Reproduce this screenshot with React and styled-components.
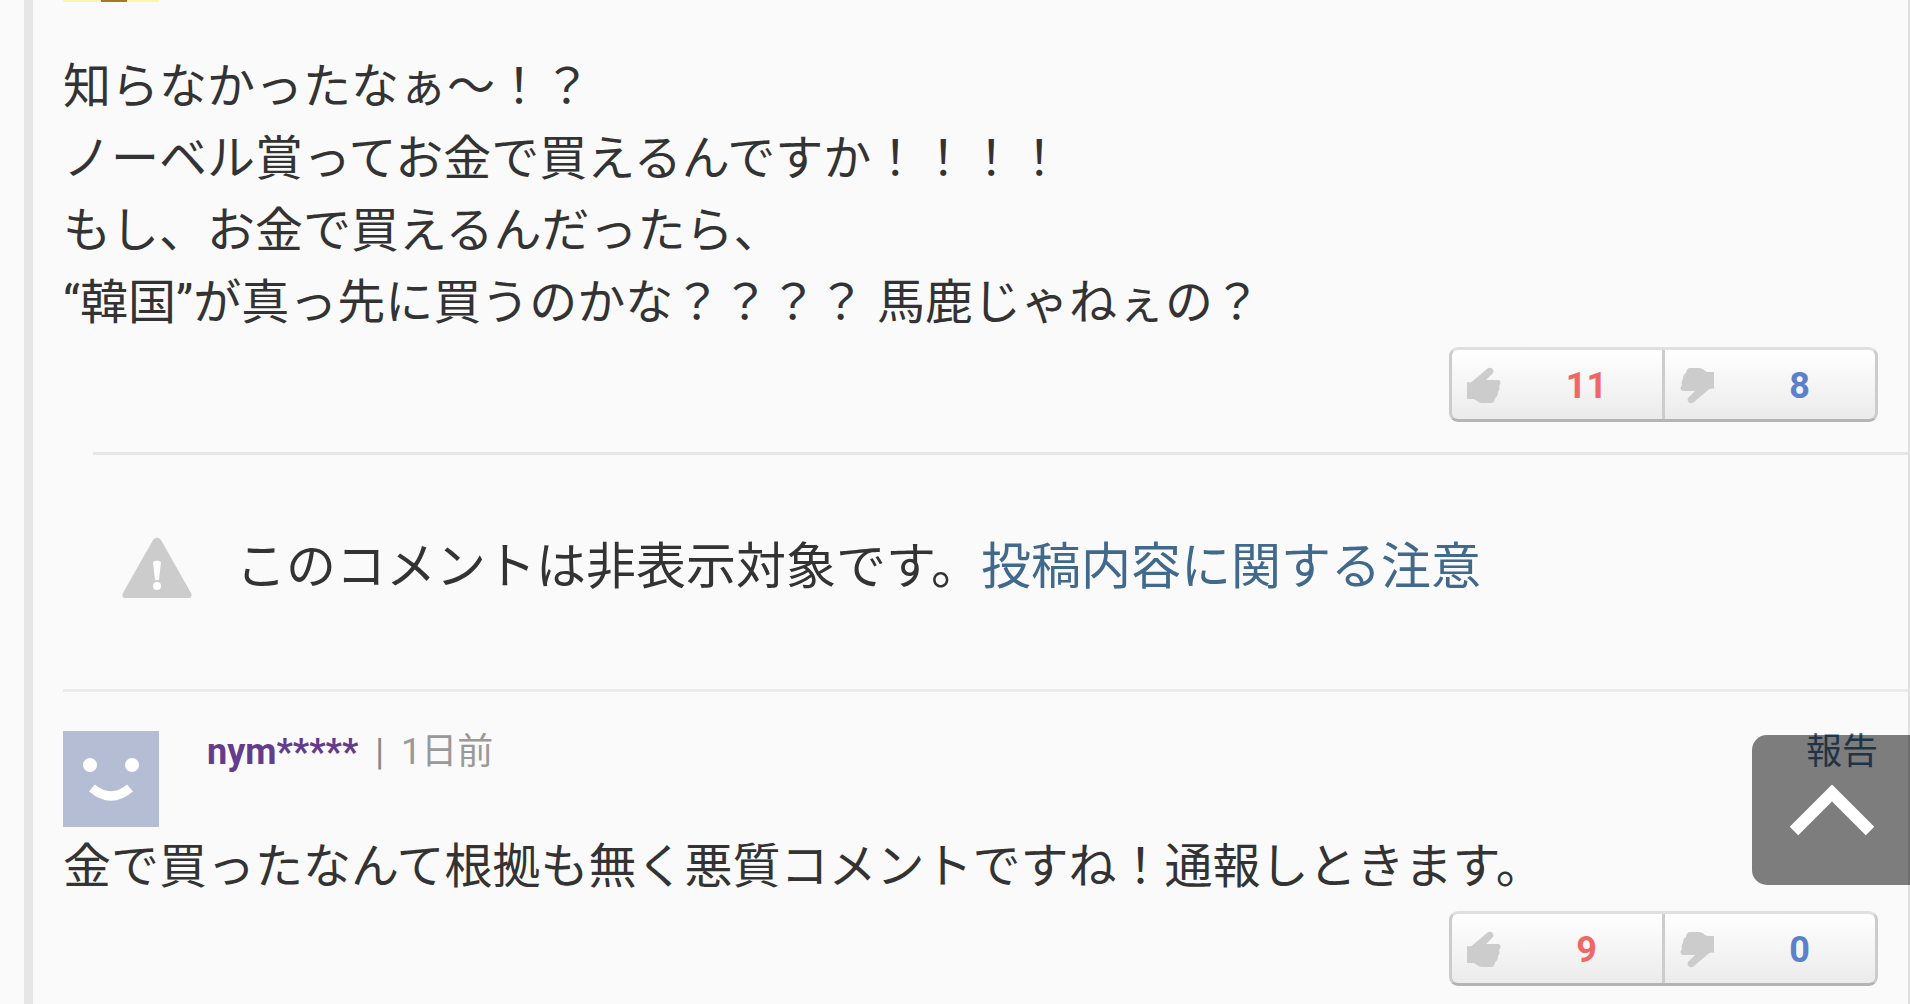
import styled, { createGlobalStyle } from 'styled-components';

const comments = [
  {
    id: 1,
    lines: [
      '知らなかったなぁ〜！？',
      'ノーベル賞ってお金で買えるんですか！！！！',
      'もし、お金で買えるんだったら、',
      '“韓国”が真っ先に買うのかな？？？？ 馬鹿じゃねぇの？',
    ],
    good: 11,
    bad: 8,
  },
  {
    id: 2,
    name: 'nym*****',
    date: '1日前',
    lines: ['金で買ったなんて根拠も無く悪質コメントですね！通報しときます。'],
    good: 9,
    bad: 0,
  },
];

function Thumb({ down }) {
  return (
    <svg width='34' height='37' viewBox='0 0 34 37' aria-hidden='true'>
      <path
        transform={down ? 'rotate(180 17 18.5)' : undefined}
        fill='#ccc'
        d='M0 15 C3 16 5 15 7 13 L20 2 C23 -1 28 2 26 6 L19 13 H31 C34 13 34 17 32 19 C33 21 32 24 31 25 C31 28 30 30 28 31 C28 34 26 36 24 36 H15 C11 36 9 32 6 32 H0 Z'
      />
    </svg>
  );
}

function Votes({ good, bad }) {
  return (
    <VoteGroup>
      <VoteButton type='button' $color='#f06767' aria-label={`そう思う ${good}`}>
        <Thumb />
        <span>{good}</span>
      </VoteButton>
      <VoteButton type='button' $color='#5b80cc' aria-label={`そう思わない ${bad}`}>
        <Thumb down />
        <span>{bad}</span>
      </VoteButton>
    </VoteGroup>
  );
}

function Face() {
  return (
    <FaceIcon viewBox='0 0 96 96' role='img' aria-label='avatar'>
      <rect width='96' height='96' fill='#b5bdd4' />
      <circle cx='27' cy='34' r='7' fill='#fff' />
      <circle cx='69' cy='34' r='7' fill='#fff' />
      <path d='M29 57 Q48 73 67 57' fill='none' stroke='#fff' strokeWidth='9' />
    </FaceIcon>
  );
}

function Comment({ comment }) {
  return (
    <article>
      {comment.name && (
        <Header>
          <Face />
          <Name href='#user'>{comment.name}</Name>
          <Divider>|</Divider>
          <time>{comment.date}</time>
          <Report href='#report'>報告</Report>
        </Header>
      )}
      <Body>
        {comment.lines.map((line) => (
          <span key={line}>{line}</span>
        ))}
      </Body>
      <Votes good={comment.good} bad={comment.bad} />
    </article>
  );
}

function App() {
  return (
    <Page>
      <GlobalStyle />
      <Thread>
        <AvatarEdge />
        <Comment comment={comments[0]} />
        <Rule $inset='30px' $color='#e6e6e6' />
        <Notice>
          <svg width='70' height='62' viewBox='0 0 70 62' aria-hidden='true'>
            <path
              d='M31 3 Q35 -2 39 3 L69 56 Q71 61 66 61 H4 Q-1 61 1 56 Z'
              fill='#ccc'
            />
            <path d='M31 25 Q35 22 39 25 L37 43 H33 Z' fill='#fff' />
            <circle cx='35' cy='49' r='4' fill='#fff' />
          </svg>
          <p>
            このコメントは非表示対象です。
            <a href='#notice'>投稿内容に関する注意</a>
          </p>
        </Notice>
        <Rule $inset='0' $color='#ebebeb' />
        <Comment comment={comments[1]} />
      </Thread>
      <ToTop type='button' aria-label='ページの先頭へ'>
        <svg width='84' height='51' viewBox='0 0 84 51' aria-hidden='true'>
          <path d='M4 46 L42 8 L80 46' fill='none' stroke='#fff' strokeWidth='12' />
        </svg>
      </ToTop>
    </Page>
  );
}

const GlobalStyle = createGlobalStyle`
  * {
    box-sizing: border-box;
  }
  body {
    margin: 0;
    background: #fafafa;
    color: #333;
    font-family: Roboto, 'Noto Sans CJK JP', sans-serif;
  }
  p {
    margin: 0;
  }
  a {
    color: #40698c;
    text-decoration: none;
  }
`;

const Page = styled.main`
  height: 100vh;
  padding-left: 24px;
  overflow: hidden;
`;

const Thread = styled.section`
  min-height: 100vh;
  padding-left: 30px;
  border-left: 9px solid #e6e6e6;
  border-right: 2px solid #e0e0e0;
`;

const AvatarEdge = styled.div`
  width: 96px;
  height: 2px;
  margin-bottom: 49px;
  background: linear-gradient(90deg, #f7f3b0 40%, #a87820 40% 67%, #fbf7a8 67%);
`;

const Rule = styled.hr`
  height: 3px;
  margin: 0 0 0 ${({ $inset }) => $inset};
  border: 0;
  background: ${({ $color }) => $color};
`;

const Header = styled.header`
  display: flex;
  align-items: flex-start;
  height: 96px;
  margin: 39px 0 4px;
  padding-right: 30px;
  color: #999;
  font-size: 36px;
  line-height: 42px;
`;

const FaceIcon = styled.svg`
  width: 96px;
  height: 96px;
  margin-right: 48px;
`;

const Name = styled.a`
  color: #643c8e;
  font-weight: 700;
`;

const Divider = styled.span`
  margin: 0 17px;
  color: #888;
`;

const Report = styled.a`
  margin-left: auto;
`;

const Body = styled.p`
  font-size: 48px;
  line-height: 72px;

  span {
    display: block;
  }
`;

const VoteGroup = styled.div`
  display: flex;
  width: 429px;
  height: 75px;
  margin: 8px 30px 30px auto;
  border: 3px solid #ccc;
  border-top-color: #e0e0e0;
  border-bottom-color: #b4b4b4;
  border-radius: 9px;
  background: linear-gradient(#fff, #ebebeb);
`;

const VoteButton = styled.button`
  display: flex;
  flex: 1;
  align-items: center;
  padding: 2px 0 0 15px;
  border: 0;
  background: none;
  color: ${({ $color }) => $color};
  font: 700 36px Roboto, sans-serif;

  & + & {
    border-left: 3px solid #ccc;
  }
  span {
    flex: 1;
    padding-left: 10px;
    text-align: center;
  }
`;

const Notice = styled.section`
  display: flex;
  align-items: flex-start;
  height: 234px;
  padding: 82px 0 0 59px;
  font-size: 50px;
  line-height: 60px;

  svg {
    margin-right: 44px;
  }
`;

const ToTop = styled.button`
  position: fixed;
  right: 0;
  bottom: 119px;
  display: grid;
  place-items: center;
  width: 158px;
  height: 150px;
  padding: 0 0 0 2px;
  border: 0;
  border-radius: 15px 0 0 15px;
  background: rgba(0, 0, 0, 0.5);
`;

export default App;
